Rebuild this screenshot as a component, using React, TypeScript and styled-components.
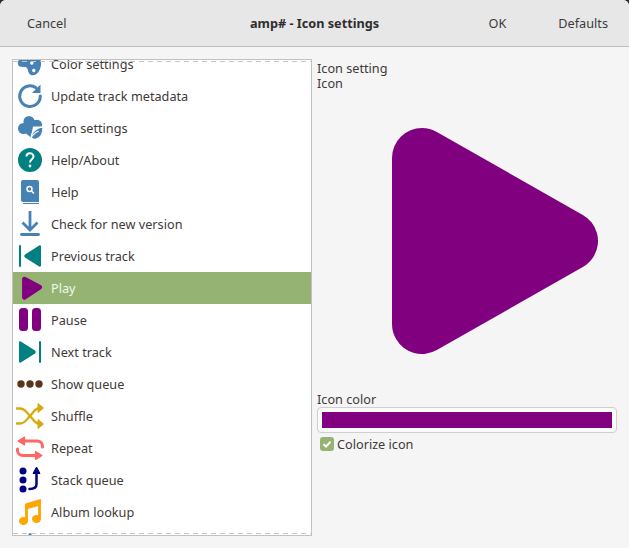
import type { ReactNode } from 'react'
import styled, { createGlobalStyle } from 'styled-components'

const GlobalStyle = createGlobalStyle`
  html, body {
    margin: 0;
    padding: 0;
    background: #2c2c2c;
  }
  body {
    font-family: "Noto Sans", "Open Sans", sans-serif;
    font-size: 12.7px;
    color: #3d3846;
  }
`

const Dialog = styled.div`
  width: 629px;
  height: 548px;
  display: flex;
  flex-direction: column;
  overflow: hidden;
  background: #f5f5f5;
  border-radius: 6px 6px 0 0;
`

const Header = styled.header`
  height: 46px;
  flex-shrink: 0;
  display: grid;
  grid-template-columns: 1fr auto 1fr;
  align-items: center;
  background: #e7e7e7;
  border-bottom: 1px solid #bdbdbd;
`

const HeaderLeft = styled.div`
  display: flex;
  padding-left: 27px;
`

const HeaderRight = styled.div`
  display: flex;
  justify-content: flex-end;
  gap: 52px;
  padding-right: 21px;
`

const HeaderButton = styled.span`
  color: #3c3c3c;
`

const Title = styled.h1`
  margin: 0;
  font-size: 12.7px;
  font-weight: 700;
  color: #2e2e2e;
`

const Body = styled.main`
  flex: 1;
  display: flex;
  gap: 5px;
  padding: 12px 12px 11px 12px;
  min-height: 0;
`

const ListFrame = styled.div`
  position: relative;
  width: 300px;
  height: 477px;
  box-sizing: border-box;
  flex-shrink: 0;
  overflow: hidden;
  background: #fff;
  border: 1px solid #c2c2c2;
`

const ScrollContent = styled.ul`
  list-style: none;
  margin: -12px 0 0;
  padding: 0;
`

const Row = styled.li<{ $selected?: boolean }>`
  height: 32px;
  display: flex;
  align-items: center;
  gap: 5px;
  padding-left: 1px;
  background: ${(p) => (p.$selected ? '#95b372' : 'transparent')};
  color: ${(p) => (p.$selected ? '#f4f6ee' : '#3f3a38')};
`

const Undershoot = styled.div<{ $edge: 'top' | 'bottom' }>`
  position: absolute;
  left: 0;
  right: 0;
  height: 1px;
  ${(p) => (p.$edge === 'top' ? 'top: 1px;' : 'bottom: 1px;')}
  background: repeating-linear-gradient(90deg, #c6c6c6 0 5px, transparent 5px 9px);
`

const Settings = styled.section`
  flex: 1;
  min-width: 0;
  display: flex;
  flex-direction: column;
`

const Label = styled.div`
  height: 15px;
  line-height: 15px;
  color: #3f3a38;
`

const SettingLabel = styled(Label)`
  margin-top: 2px;
`

const Preview = styled.div`
  height: 226px;
  margin: 37px 0 38px;
  display: flex;
  padding-left: 75px;
`

const ColorButton = styled.div`
  height: 26px;
  box-sizing: border-box;
  padding: 4px;
  background: #fafafa;
  border: 1px solid #cfcfcf;
  border-radius: 4px;
`

const Swatch = styled.div<{ $color: string }>`
  height: 100%;
  background: ${(p) => p.$color};
`

const CheckRow = styled.label`
  display: flex;
  align-items: center;
  gap: 3px;
  margin-top: 2px;
  padding-left: 3px;
  color: #3f3a38;
`

const CheckBox = styled.span`
  width: 14px;
  height: 14px;
  display: flex;
  align-items: center;
  justify-content: center;
  background: #95b372;
  border-radius: 3px;
`

const IconBox = styled.svg`
  width: 32px;
  height: 32px;
  flex-shrink: 0;
  display: block;
`

const BLUE = '#4682b4'
const TEAL = '#008080'
const PURPLE = '#800080'
const GOLD = '#d4ac0d'
const CORAL = '#ff6666'
const NAVY = '#000080'
const ORANGE = '#ffa500'

function Icon({ children }: { children: ReactNode }) {
  return <IconBox viewBox="0 0 32 32">{children}</IconBox>
}

const rows: { label: string; icon: ReactNode; selected?: boolean }[] = [
  {
    label: 'Color settings',
    icon: (
      <path
        fill={BLUE}
        fillRule="evenodd"
        d="M4 14c-.6 2.500.8 4.500 3 4.800 2.500.3 4-.3 5.500.7 1.500 1.200 1.200 3.500 2.500 5.700 1.500 2.500 5 2.800 7.500.8 3.500-2.800 5-8 4.500-12.500-.5-4-4-7-8-7.500-6-.7-13.500 2-15 8Zm15.500 1a1.700 1.700 0 1 0 0 .01Zm2 7.500a1.700 1.700 0 1 0 0 .01Z"
      />
    ),
  },
  {
    label: 'Update track metadata',
    icon: (
      <>
        <path d="M22 7.800A10.300 10.300 0 1 0 26.300 16" fill="none" stroke={BLUE} strokeWidth="3" strokeLinecap="round" />
        <path d="M26.500 4.500v8.500h-8.500z" fill={BLUE} />
      </>
    ),
  },
  {
    label: 'Icon settings',
    icon: (
      <>
        <circle cx="15" cy="9.500" r="5.500" fill={BLUE} />
        <circle cx="9.500" cy="16.500" r="5.500" fill={BLUE} />
        <path d="M12 8h11c3 0 5 2 5 4.500v2H19l-2 11-5-4Z" fill={BLUE} />
        <path
          fill={BLUE}
          stroke="#fff"
          strokeWidth="1.400"
          d="M29 15c.5 6-2 11.500-7.500 12.500-1.500.2-3-.2-4-1.300C16.500 21 22 15.500 29 15Z"
        />
        <path d="M15.500 29c1.500-4.500 5-8 9-10" fill="none" stroke="#fff" strokeWidth="1.300" />
      </>
    ),
  },
  {
    label: 'Help/About',
    icon: (
      <>
        <circle cx="16" cy="16" r="12" fill={TEAL} />
        <path d="M12.500 12.500c0-2 1.600-3.200 3.500-3.200s3.500 1.300 3.500 3.100c0 2.800-3.500 2.800-3.500 6" fill="none" stroke="#fff" strokeWidth="2" />
        <circle cx="16" cy="22" r="1.400" fill="#fff" />
      </>
    ),
  },
  {
    label: 'Help',
    icon: (
      <>
        <path d="M7 6a2 2 0 0 1 2-2h14a2 2 0 0 1 2 2v20H9a2 2 0 0 1-2-2Z" fill={BLUE} />
        <path d="M9 27.500h16" stroke={BLUE} strokeWidth="1" />
        <circle cx="15.500" cy="13" r="2.500" fill="none" stroke="#fff" strokeWidth="1.500" />
        <path d="m17.500 15 2.500 2.500" stroke="#fff" strokeWidth="1.500" />
      </>
    ),
  },
  {
    label: 'Check for new version',
    icon: (
      <>
        <path d="M16 3v18M8.500 14.500l7.500 7.500 7.500-7.500" fill="none" stroke={BLUE} strokeWidth="2.800" />
        <path d="M7.500 26.500h17" stroke={BLUE} strokeWidth="2.800" strokeLinecap="round" />
      </>
    ),
  },
  {
    label: 'Previous track',
    icon: (
      <>
        <rect x="5" y="5" width="2" height="22" rx="1" fill={TEAL} />
        <path d="M27 6.500v19c0 1-1 1.500-1.800 1L11 17.500c-1-.7-1-2.300 0-3l14.200-9c.8-.5 1.800 0 1.800 1Z" fill={TEAL} />
      </>
    ),
  },
  {
    label: 'Play',
    selected: true,
    icon: <path d="M11 7.800 26.800 16 11 26.200Z" fill={PURPLE} stroke={PURPLE} strokeWidth="5" strokeLinejoin="round" transform="translate(-.1 -.5) scale(.96 .98)" />,
  },
  {
    label: 'Pause',
    icon: (
      <>
        <rect x="5" y="4" width="9" height="23" rx="3.500" fill={PURPLE} />
        <rect x="18" y="4" width="9" height="23" rx="3.500" fill={PURPLE} />
      </>
    ),
  },
  {
    label: 'Next track',
    icon: (
      <>
        <path d="M5 6.500v19c0 1 1 1.500 1.800 1L21 17.500c1-.7 1-2.300 0-3l-14.200-9C6 5 5 5.500 5 6.500Z" fill={TEAL} />
        <rect x="25" y="5" width="2" height="22" rx="1" fill={TEAL} />
      </>
    ),
  },
  {
    label: 'Show queue',
    icon: (
      <>
        <circle cx="7" cy="16" r="3.700" fill="#59361b" />
        <circle cx="16" cy="16" r="3.700" fill="#59361b" />
        <circle cx="25" cy="16" r="3.700" fill="#59361b" />
      </>
    ),
  },
  {
    label: 'Shuffle',
    icon: (
      <>
        <path d="M2 8.500h4c5 0 6 3.500 10 7.500s5 8 10 8M2 23.500h4c5 0 6-3.500 10-7.500s5-8 10-8" fill="none" stroke={GOLD} strokeWidth="2.300" />
        <path d="M24 3.500 29.500 8 24 12.500ZM24 19.500l5.500 4.500-5.500 4.500Z" fill={GOLD} stroke={GOLD} strokeLinejoin="round" />
      </>
    ),
  },
  {
    label: 'Repeat',
    icon: (
      <>
        <path d="M10 9h13c3 0 5.500 2 5.500 5v1M22 23.500H9c-3 0-5.500-2-5.500-5v-1.500" fill="none" stroke={CORAL} strokeWidth="3" strokeLinecap="round" />
        <path d="M10.500 5v8L4 9ZM21.500 19.500v8l6.500-4Z" fill={CORAL} stroke={CORAL} strokeWidth="1.200" strokeLinejoin="round" />
      </>
    ),
  },
  {
    label: 'Stack queue',
    icon: (
      <>
        <circle cx="9" cy="7" r="3.500" fill={NAVY} />
        <circle cx="9" cy="16" r="3.500" fill={NAVY} />
        <circle cx="9" cy="25" r="3.500" fill={NAVY} />
        <path d="M15.500 25c4 0 7-1 7-5V8" fill="none" stroke={NAVY} strokeWidth="2.500" strokeLinecap="round" />
        <path d="M22.500 3l3.500 6.500h-7Z" fill={NAVY} stroke={NAVY} strokeLinejoin="round" />
      </>
    ),
  },
  {
    label: 'Album lookup',
    icon: (
      <>
        <path d="M12.500 10v15M25.500 4v19" fill="none" stroke={ORANGE} strokeWidth="2.800" />
        <path d="M11.500 8 26.500 3.500V9l-15 4Z" fill={ORANGE} strokeLinejoin="round" stroke={ORANGE} />
        <ellipse cx="9.500" cy="25" rx="4.500" ry="4" fill={ORANGE} />
        <ellipse cx="22.500" cy="23" rx="4.500" ry="4" fill={ORANGE} />
      </>
    ),
  },
  {
    label: '',
    icon: <circle cx="16" cy="6.500" r="1.500" fill={BLUE} />,
  },
]

export default function App() {
  return (
    <>
      <GlobalStyle />
      <Dialog>
        <Header>
          <HeaderLeft>
            <HeaderButton>Cancel</HeaderButton>
          </HeaderLeft>
          <Title>amp# - Icon settings</Title>
          <HeaderRight>
            <HeaderButton>OK</HeaderButton>
            <HeaderButton>Defaults</HeaderButton>
          </HeaderRight>
        </Header>
        <Body>
          <ListFrame>
            <ScrollContent>
              {rows.map((row) => (
                <Row key={row.label} $selected={row.selected}>
                  <Icon>{row.icon}</Icon>
                  {row.label}
                </Row>
              ))}
            </ScrollContent>
            <Undershoot $edge="top" />
            <Undershoot $edge="bottom" />
          </ListFrame>
          <Settings>
            <SettingLabel>Icon setting</SettingLabel>
            <Label>Icon</Label>
            <Preview>
              <svg width="206" height="226" viewBox="0 0 206 226">
                <path d="M30 30 176 113 30 196Z" fill={PURPLE} stroke={PURPLE} strokeWidth="60" strokeLinejoin="round" />
              </svg>
            </Preview>
            <Label>Icon color</Label>
            <ColorButton>
              <Swatch $color={PURPLE} />
            </ColorButton>
            <CheckRow>
              <CheckBox>
                <svg width="10" height="10" viewBox="0 0 10 10">
                  <path d="M1.500 5.200 4 7.500 8.500 2.800" fill="none" stroke="#fff" strokeWidth="2" />
                </svg>
              </CheckBox>
              Colorize icon
            </CheckRow>
          </Settings>
        </Body>
      </Dialog>
    </>
  )
}
